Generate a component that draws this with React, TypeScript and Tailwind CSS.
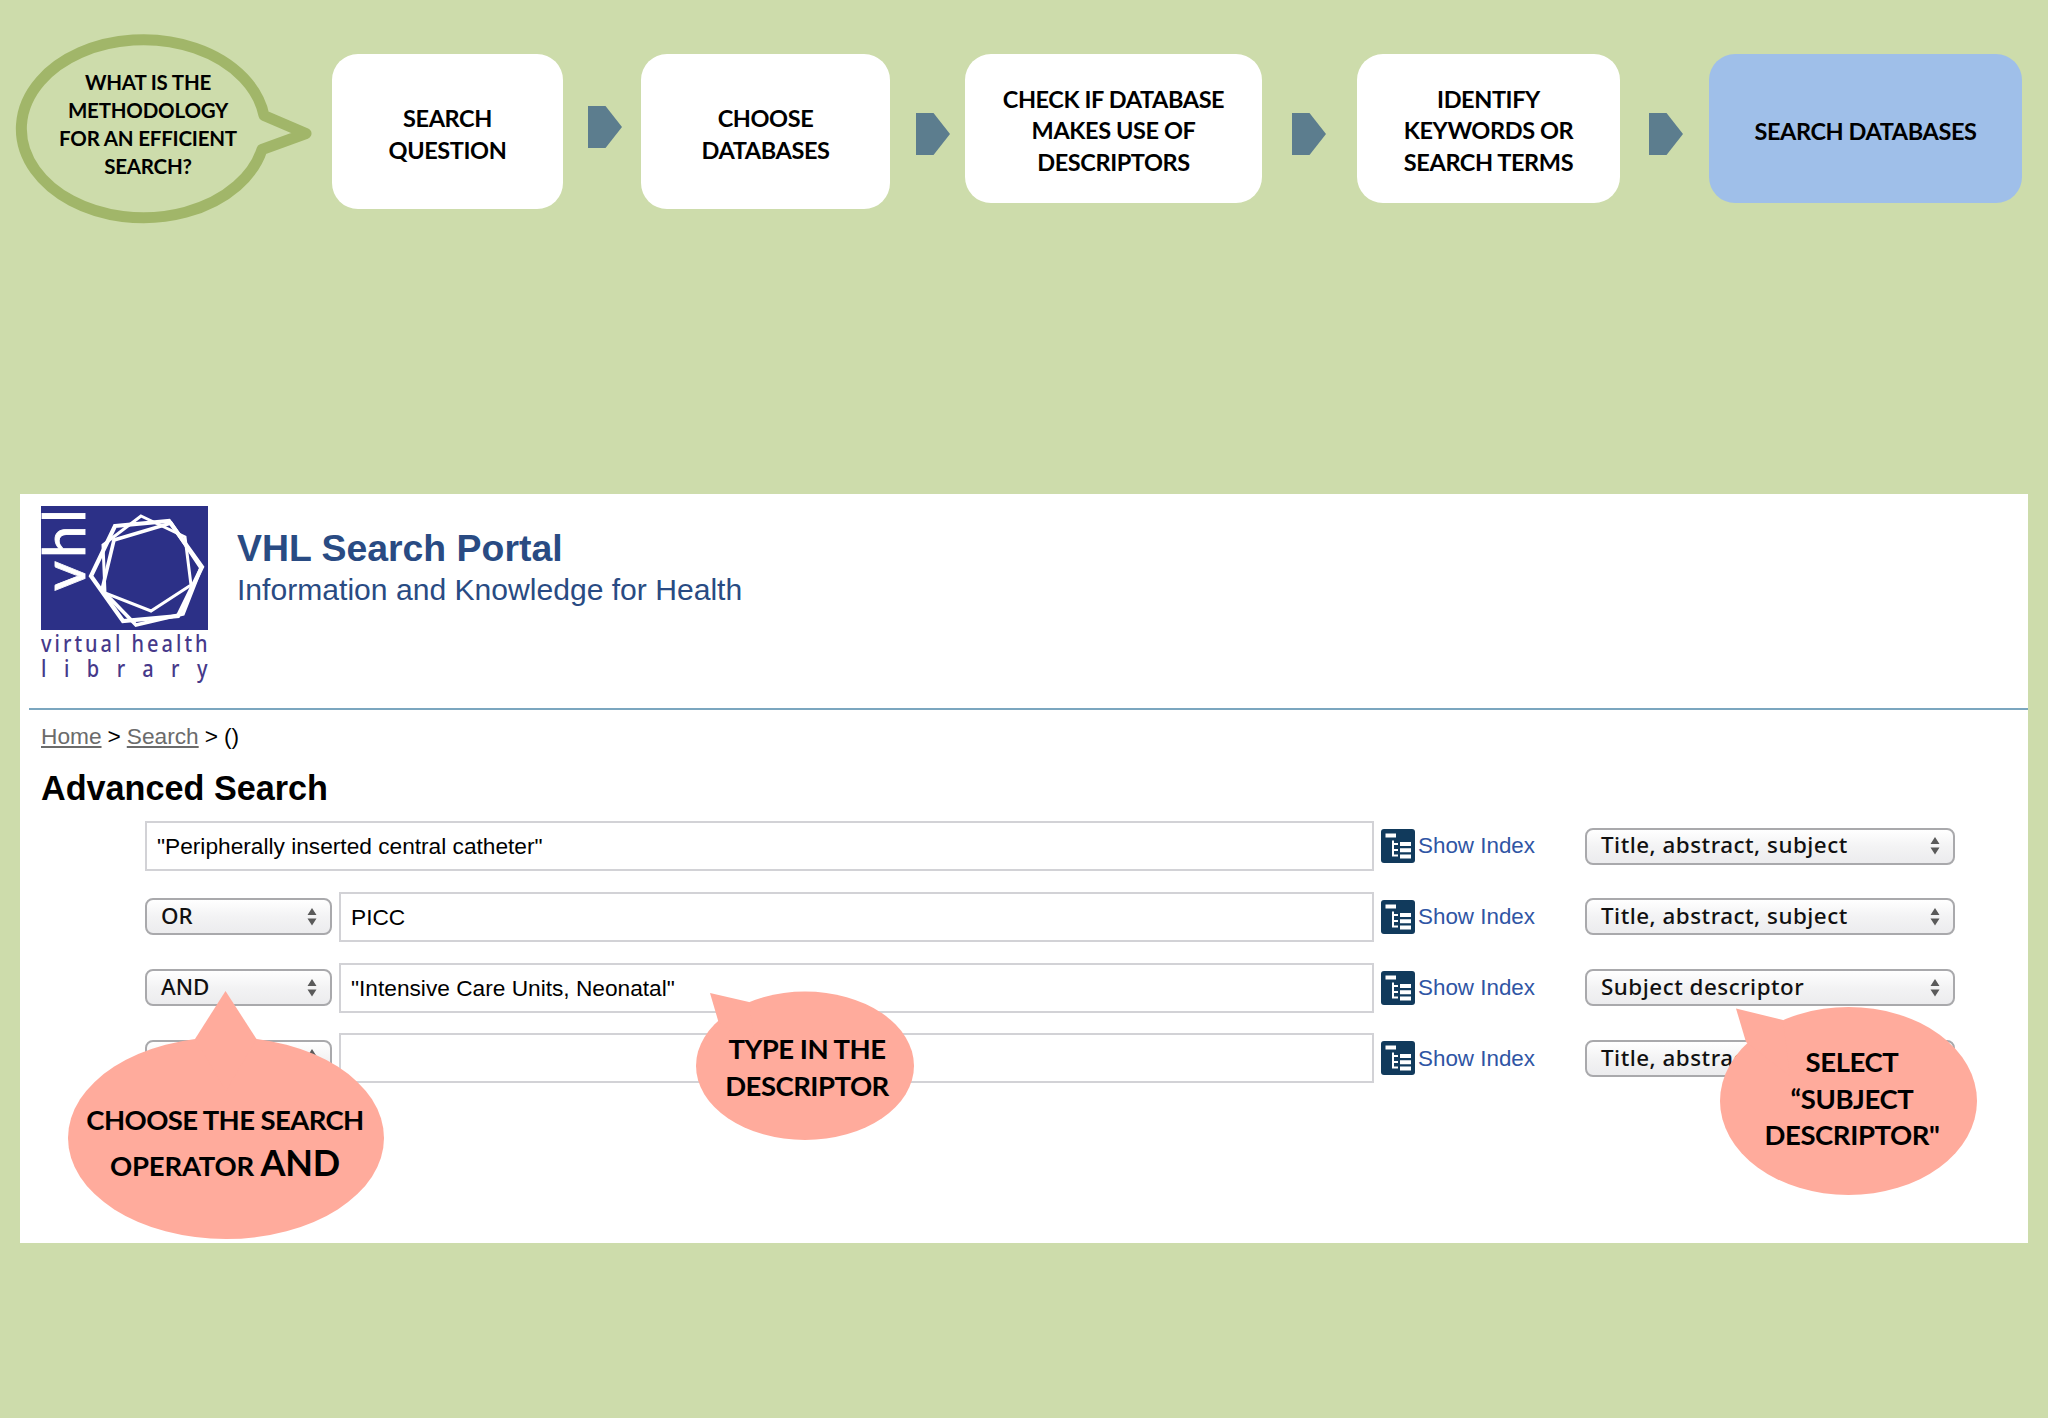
import type { ReactNode } from "react";

interface Step {
  lines: string[];
  box: string;
  arrow?: string;
}

interface SearchRow {
  operator: string | null;
  term: string;
  field: string;
}

const steps: Step[] = [
  {
    lines: ["SEARCH", "QUESTION"],
    box: "ml-[20px] w-[231px] h-[155px] bg-white pt-[6px]",
    arrow: "ml-[25px] mt-[52px] mr-[19px]",
  },
  {
    lines: ["CHOOSE", "DATABASES"],
    box: "w-[249px] h-[155px] bg-white pt-[6px]",
    arrow: "ml-[26px] mt-[59px] mr-[15px]",
  },
  {
    lines: ["CHECK IF DATABASE", "MAKES USE OF", "DESCRIPTORS"],
    box: "w-[297px] h-[149px] bg-white pt-[5px]",
    arrow: "ml-[30px] mt-[59px] mr-[31px]",
  },
  {
    lines: ["IDENTIFY", "KEYWORDS OR", "SEARCH TERMS"],
    box: "w-[263px] h-[149px] bg-white pt-[5px]",
    arrow: "ml-[29px] mt-[59px] mr-[26px]",
  },
  {
    lines: ["SEARCH DATABASES"],
    box: "w-[313px] h-[149px] bg-[#9fbfe9] pt-[6px]",
  },
];

const rows: SearchRow[] = [
  { operator: null, term: '"Peripherally inserted central catheter"', field: "Title, abstract, subject" },
  { operator: "OR", term: "PICC", field: "Title, abstract, subject" },
  { operator: "AND", term: '"Intensive Care Units, Neonatal"', field: "Subject descriptor" },
  { operator: "AND", term: "", field: "Title, abstract, subject" },
];

const StepArrow = ({ className }: { className: string }) => (
  <svg className={`h-[42px] w-[34px] shrink-0 ${className}`} viewBox="0 0 34 42">
    <path d="M0 0H17.5L34 21L17.5 42H0Z" fill="#5c7d8e" />
  </svg>
);

const MethodologyBubble = () => (
  <div className="relative h-[192px] w-[300px] shrink-0">
    <svg className="absolute inset-0" width="300" height="192" viewBox="0 0 300 192" fill="none">
      <path
        d="M252 83.5A122 89 0 1 0 250 117.5L294 101.5Z"
        stroke="#a1b669"
        strokeWidth="11"
        strokeLinejoin="round"
      />
    </svg>
    <div className="relative w-[272px] pt-[36px] text-center text-[20.5px] leading-[28.1px] font-bold tracking-[-0.2px]">
      <p>WHAT IS THE</p>
      <p>METHODOLOGY</p>
      <p>FOR AN EFFICIENT</p>
      <p>SEARCH?</p>
    </div>
  </div>
);

const Logo = () => (
  <svg className="shrink-0 overflow-visible" width="168" height="184" viewBox="0 0 168 184">
    <rect width="167" height="124" fill="#2c3087" />
    <text
      transform="translate(43.5 85) rotate(-90)"
      fill="#fff"
      stroke="#fff"
      strokeWidth="0.8"
      fontFamily="Lato, sans-serif"
      fontSize="58"
      textLength="82"
    >
      vhl
    </text>
    <g fill="none" stroke="#fff">
      <path d="M100 10L144 31L150 79L110 105L64 87L62 39Z" strokeWidth="3" />
      <path d="M74 20L128 15L161 61L137 110L82 115L50 70Z" strokeWidth="4.2" />
      <path d="M73 34L130 17L160 62L142 108L95 119L61 84Z" strokeWidth="3.6" />
    </g>
    <g fill="#46398a" fontFamily="'Noto Sans', sans-serif" fontWeight="500" fontSize="23.5">
      <text transform="translate(0 146) scale(0.85 1)" textLength="196">virtual health</text>
      <text transform="translate(0 171) scale(0.85 1)" textLength="196">library</text>
    </g>
  </svg>
);

const IndexIcon = () => (
  <svg width="34" height="34" viewBox="0 0 34 34">
    <rect width="34" height="34" rx="3" fill="#113a5c" />
    <path
      d="M4.5 4.5H15V8.5H4.5ZM19 13H30V17H19ZM19 19.3H30V23.3H19ZM19 25.6H30V29.6H19Z"
      fill="#fff"
    />
    <path d="M12 11.5V27.5M11 15H17M11 21H17M11 26.5H17" stroke="#fff" strokeWidth="2" fill="none" />
  </svg>
);

const SelectBox = ({ value, className }: { value: string; className: string }) => (
  <button
    className={`flex h-[37px] items-center justify-between rounded-[8px] border-2 border-[#a9a9ac] bg-linear-to-b from-white via-[#f3f3f4] to-[#ececee] pr-[13px] pb-px pl-[14px] font-['Noto_Sans',sans-serif] text-[22.4px] leading-none font-medium text-[#111] ${className}`}
  >
    <span>{value}</span>
    <svg className="mt-px" width="10" height="18" viewBox="0 0 10 18" fill="#5a5a5a">
      <path d="M5 0L9.5 7H0.5ZM5 17.5L0.5 10.5H9.5Z" />
    </svg>
  </button>
);

interface CalloutProps {
  className: string;
  width: number;
  height: number;
  radiusY: number;
  tail: string;
  children: ReactNode;
}

// The ellipse sits on the bottom edge of the box, the tail pokes out above it
const Callout = ({ className, width, height, radiusY, tail, children }: CalloutProps) => (
  <div className={`absolute text-center font-[Lato,sans-serif] text-[27.5px] font-bold text-black ${className}`}>
    <svg
      className="absolute inset-0"
      width={width}
      height={height}
      viewBox={`0 0 ${width} ${height}`}
      fill="#ffab9c"
    >
      <ellipse cx={width / 2} cy={height - radiusY} rx={width / 2} ry={radiusY} />
      <polygon points={tail} />
    </svg>
    <div className="relative">{children}</div>
  </div>
);

const App = () => {
  return (
    <div className="h-[1418px] w-[2048px] overflow-hidden bg-[#cddcab] font-[Lato,sans-serif] text-black">
      {/* Methodology steps */}
      <header className="flex h-[494px] items-start pt-[32px] pl-[12px]">
        <MethodologyBubble />
        <div className="flex items-start pt-[22px]">
          {steps.map((step, i) => (
            <div key={i} className="flex items-start">
              <div
                className={`flex shrink-0 flex-col items-center justify-center rounded-[26px] text-[23.5px] leading-[31.6px] font-bold tracking-[-0.4px] ${step.box}`}
              >
                {step.lines.map((line) => (
                  <span key={line} className="whitespace-nowrap">{line}</span>
                ))}
              </div>
              {step.arrow && <StepArrow className={step.arrow} />}
            </div>
          ))}
        </div>
      </header>

      {/* Search portal */}
      <main className="relative ml-[20px] h-[749px] w-[2008px] bg-white font-['Liberation_Sans',Arial,sans-serif]">
        <div className="flex h-[214px] pt-[12px] pl-[21px]">
          <Logo />
          <div className="ml-[28px] pt-[21px] text-[#294b83]">
            <h1 className="text-[37.4px] leading-[42px] font-bold">VHL Search Portal</h1>
            <p className="text-[30.1px] leading-[42px]">Information and Knowledge for Health</p>
          </div>
        </div>
        <div className="ml-[9px] h-[2px] bg-[#7ba6bf]" />

        <nav className="mt-[12px] ml-[21px] flex gap-[6px] text-[22.7px] leading-[28px]">
          <a className="text-[#6b6b6b] underline underline-offset-2">Home</a>
          <span>&gt;</span>
          <a className="text-[#6b6b6b] underline underline-offset-2">Search</a>
          <span>&gt;</span>
          <span>()</span>
        </nav>
        <h2 className="mt-[18px] ml-[21px] text-[34.2px] leading-[40px] font-bold">Advanced Search</h2>

        <div className="mt-[13px] ml-[125px] flex flex-col gap-[20.8px]">
          {rows.map((row, i) => (
            <div key={i} className="flex h-[50px] w-[1810px] items-center">
              {row.operator && <SelectBox value={row.operator} className="mr-[7px] w-[187px]" />}
              <div className="flex h-full flex-1 items-center border-2 border-[#d2d2d6] pl-[10px] text-[22.7px]">
                {row.term}
              </div>
              <a className="ml-[7px] flex w-[204px] items-center gap-[3px] text-[22.4px] text-[#2f55a4]">
                <IndexIcon />
                <span>Show Index</span>
              </a>
              <SelectBox value={row.field} className="w-[370px] tracking-[0.5px]" />
            </div>
          ))}
        </div>

        {/* Hints */}
        <Callout
          className="top-[497px] left-[48px] h-[248px] w-[316px] pt-[110px] leading-[38px]"
          width={316}
          height={248}
          radiusY={101}
          tail="127,48 157.5,0 188.5,48 158,100"
        >
          <p className="-ml-[2px] tracking-[-0.6px]">CHOOSE THE SEARCH</p>
          <p className="mt-[4px] -ml-[2px] tracking-[-0.2px]">
            OPERATOR <span className="text-[36px]">AND</span>
          </p>
        </Callout>
        <Callout
          className="top-[497px] left-[676px] h-[149px] w-[218px] pt-[40px] pl-[4px] leading-[36.7px] tracking-[-0.5px]"
          width={218}
          height={149}
          radiusY={74.2}
          tail="22.5,31 14,2 53,11 60,60"
        >
          <p>TYPE IN THE</p>
          <p>DESCRIPTOR</p>
        </Callout>
        <Callout
          className="top-[512px] left-[1700px] h-[189px] w-[257px] pt-[38px] pl-[7px] leading-[36.7px] tracking-[-0.4px]"
          width={257}
          height={189}
          radiusY={94}
          tail="26,36 16,2.5 63,14 70,70"
        >
          <p>SELECT</p>
          <p>“SUBJECT</p>
          <p>DESCRIPTOR"</p>
        </Callout>
      </main>
    </div>
  );
};

export default App;
